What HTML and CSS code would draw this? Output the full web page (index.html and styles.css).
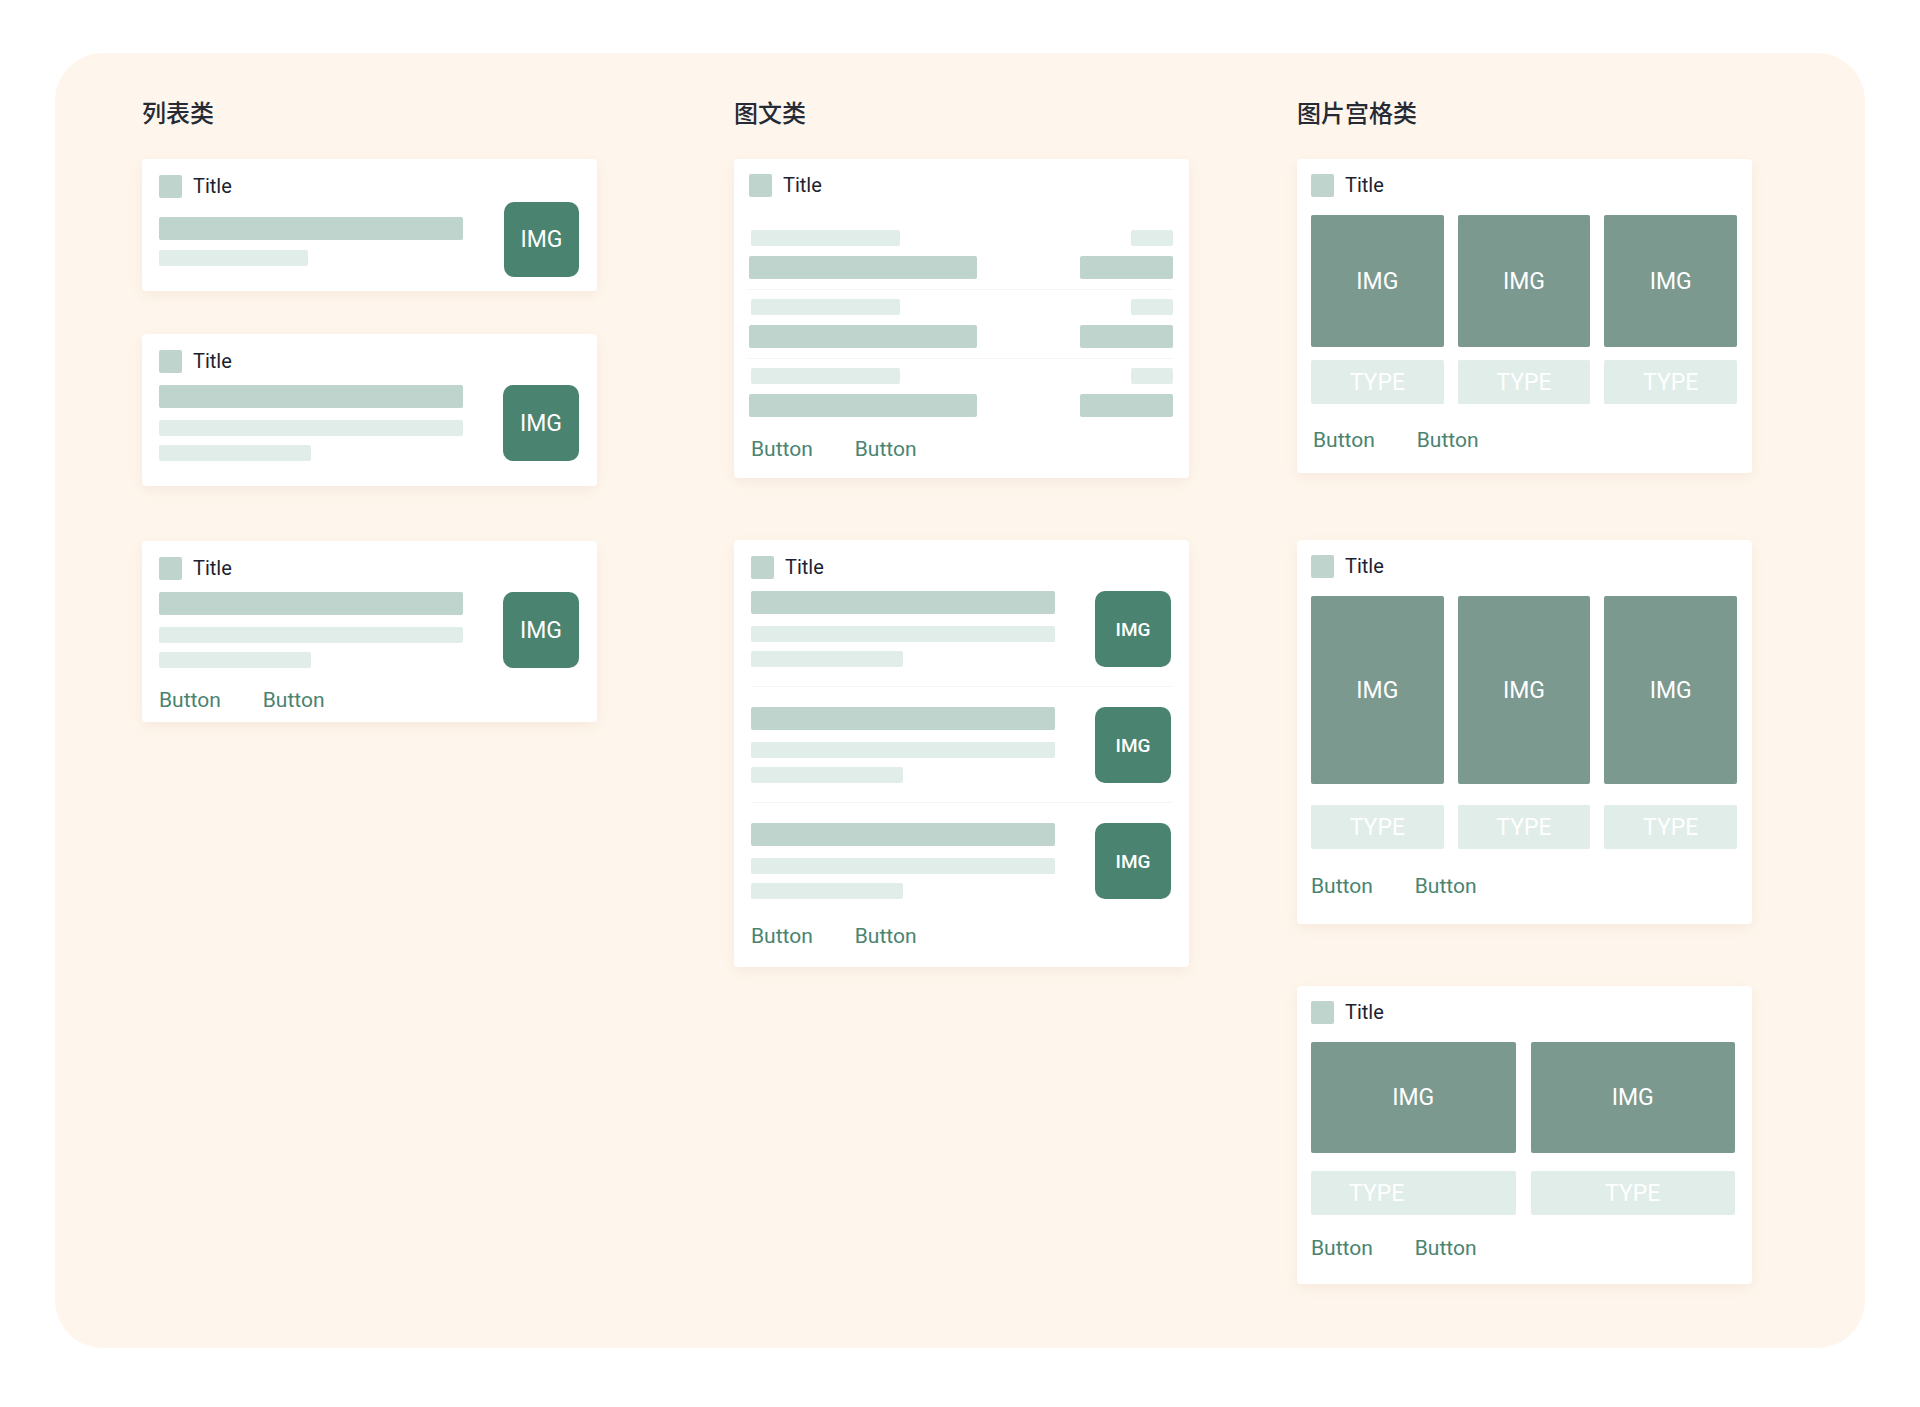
FILE: index.html
```html
<!DOCTYPE html>
<html lang="zh-CN">
<head>
  <meta charset="UTF-8">
  <title>卡片模板</title>
  <link rel="stylesheet" href="styles.css">
</head>
<body>
  <div class="board">

    <section class="col">
      <h2 class="col-title">列表类</h2>

      <div class="card card-list gap-43">
        <div class="card-head"><span class="head-mark"></span><span class="head-text">Title</span></div>
        <div class="list-body list-body-tight">
          <div class="bars bars-offset">
            <div class="bar bar-dark"></div>
            <div class="bar bar-light bar-short"></div>
          </div>
          <div class="thumb thumb-75">IMG</div>
        </div>
      </div>

      <div class="card card-list card-list-tall gap-55">
        <div class="card-head"><span class="head-mark"></span><span class="head-text">Title</span></div>
        <div class="list-body">
          <div class="bars">
            <div class="bar bar-dark"></div>
            <div class="bar bar-light"></div>
            <div class="bar bar-light bar-half"></div>
          </div>
          <div class="thumb">IMG</div>
        </div>
      </div>

      <div class="card card-list card-list-btn">
        <div class="card-head"><span class="head-mark"></span><span class="head-text">Title</span></div>
        <div class="list-body">
          <div class="bars">
            <div class="bar bar-dark"></div>
            <div class="bar bar-light"></div>
            <div class="bar bar-light bar-half"></div>
          </div>
          <div class="thumb">IMG</div>
        </div>
        <div class="actions actions-list">
          <span>Button</span>
          <span>Button</span>
        </div>
      </div>
    </section>

    <section class="col">
      <h2 class="col-title">图文类</h2>

      <div class="card card-kv gap-62">
        <div class="card-head"><span class="head-mark"></span><span class="head-text">Title</span></div>
        <div class="kv-list">
          <div class="kv-row">
            <div class="kv-line"><div class="bar bar-light kv-label"></div><div class="bar bar-light kv-label-r"></div></div>
            <div class="kv-line"><div class="bar bar-dark kv-value"></div><div class="bar bar-dark kv-value-r"></div></div>
          </div>
          <div class="kv-row">
            <div class="kv-line"><div class="bar bar-light kv-label"></div><div class="bar bar-light kv-label-r"></div></div>
            <div class="kv-line"><div class="bar bar-dark kv-value"></div><div class="bar bar-dark kv-value-r"></div></div>
          </div>
          <div class="kv-row">
            <div class="kv-line"><div class="bar bar-light kv-label"></div><div class="bar bar-light kv-label-r"></div></div>
            <div class="kv-line"><div class="bar bar-dark kv-value"></div><div class="bar bar-dark kv-value-r"></div></div>
          </div>
        </div>
        <div class="actions actions-kv actions-inset">
          <span>Button</span>
          <span>Button</span>
        </div>
      </div>

      <div class="card card-feed">
        <div class="card-head"><span class="head-mark"></span><span class="head-text">Title</span></div>
        <div class="feed">
          <div class="feed-row">
            <div class="bars">
              <div class="bar bar-dark"></div>
              <div class="bar bar-light"></div>
              <div class="bar bar-light bar-half"></div>
            </div>
            <div class="thumb thumb-small">IMG</div>
          </div>
          <div class="feed-row">
            <div class="bars">
              <div class="bar bar-dark"></div>
              <div class="bar bar-light"></div>
              <div class="bar bar-light bar-half"></div>
            </div>
            <div class="thumb thumb-small">IMG</div>
          </div>
          <div class="feed-row">
            <div class="bars">
              <div class="bar bar-dark"></div>
              <div class="bar bar-light"></div>
              <div class="bar bar-light bar-half"></div>
            </div>
            <div class="thumb thumb-small">IMG</div>
          </div>
        </div>
        <div class="actions actions-feed">
          <span>Button</span>
          <span>Button</span>
        </div>
      </div>
    </section>

    <section class="col">
      <h2 class="col-title">图片宫格类</h2>

      <div class="card card-grid gap-67">
        <div class="card-head"><span class="head-mark"></span><span class="head-text">Title</span></div>
        <div class="tiles tiles-3">
          <div class="tile tile-sq">IMG</div>
          <div class="tile tile-sq">IMG</div>
          <div class="tile tile-sq">IMG</div>
        </div>
        <div class="tiles tiles-3 types-13">
          <div class="type">TYPE</div>
          <div class="type">TYPE</div>
          <div class="type">TYPE</div>
        </div>
        <div class="actions actions-grid1 actions-inset">
          <span>Button</span>
          <span>Button</span>
        </div>
      </div>

      <div class="card card-grid gap-62">
        <div class="card-head"><span class="head-mark"></span><span class="head-text">Title</span></div>
        <div class="tiles tiles-3">
          <div class="tile tile-tall">IMG</div>
          <div class="tile tile-tall">IMG</div>
          <div class="tile tile-tall">IMG</div>
        </div>
        <div class="tiles tiles-3 types-21">
          <div class="type">TYPE</div>
          <div class="type">TYPE</div>
          <div class="type">TYPE</div>
        </div>
        <div class="actions actions-grid2">
          <span>Button</span>
          <span>Button</span>
        </div>
      </div>

      <div class="card card-grid card-grid-2">
        <div class="card-head"><span class="head-mark"></span><span class="head-text">Title</span></div>
        <div class="tiles tiles-2">
          <div class="tile tile-wide">IMG</div>
          <div class="tile tile-wide">IMG</div>
        </div>
        <div class="tiles tiles-2 types-18">
          <div class="type type-left">TYPE</div>
          <div class="type">TYPE</div>
        </div>
        <div class="actions actions-grid3">
          <span>Button</span>
          <span>Button</span>
        </div>
      </div>
    </section>

  </div>
</body>
</html>
```

FILE: styles.css
```css
body {
  margin: 0;
  background: #fff;
  font-family: Roboto, "Liberation Sans", sans-serif;
}
.board {
  margin: 53px 55px 0;
  height: 1295px;
  box-sizing: border-box;
  padding: 43px 0 0 87px;
  background: #fef6ec;
  border-radius: 48px;
  display: grid;
  grid-template-columns: 592px 563px 455px;
  align-items: start;
}
.col {
  width: 455px;
}
.col-title {
  margin: 0 0 31px;
  height: 32px;
  font-family: "Noto Sans CJK SC", sans-serif;
  font-size: 24px;
  line-height: 32px;
  font-weight: 500;
  color: #252a34;
}
.card {
  background: #fff;
  border-radius: 4px;
  box-shadow: 0 4px 14px rgba(214, 168, 148, 0.16);
}
.gap-43 { margin-bottom: 43px; }
.gap-55 { margin-bottom: 55px; }
.gap-62 { margin-bottom: 62px; }
.gap-67 { margin-bottom: 67px; }

.card-head {
  display: flex;
  align-items: center;
  gap: 11px;
  height: 23px;
}
.head-mark {
  width: 23px;
  height: 23px;
  border-radius: 2px;
  background: #bfd4cc;
}
.head-text {
  font-size: 20px;
  line-height: 23px;
  color: #1d2230;
}

.bar {
  height: 16px;
  border-radius: 2px;
  background: #e0ede8;
}
.bar-dark {
  height: 23px;
  background: #bfd4cc;
}
.bars {
  width: 304px;
  display: flex;
  flex-direction: column;
}
.bars .bar + .bar { margin-top: 9px; }
.bars .bar-dark + .bar { margin-top: 12px; }
.bars-offset { padding-top: 15px; }
.bars-offset .bar-dark + .bar { margin-top: 10px; }
.bar-short { width: 149px; }
.bar-half { width: 152px; }

.thumb {
  width: 76px;
  height: 76px;
  border-radius: 10px;
  background: #4a8370;
  color: #fff;
  font-size: 23px;
  display: flex;
  align-items: center;
  justify-content: center;
}
.thumb-75 {
  width: 75px;
  height: 75px;
}
.thumb-small {
  font-size: 19px;
  font-weight: 500;
}

/* 列表类 */
.card-list {
  padding: 16px 18px 14px 17px;
}
.card-list-tall { padding-bottom: 25px; }
.card-list-btn { padding-bottom: 10px; }
.list-body {
  margin-top: 12px;
  display: flex;
  justify-content: space-between;
  align-items: flex-start;
}
.list-body-tight { margin-top: 4px; }

.actions {
  display: flex;
  gap: 42px;
  font-size: 21px;
  line-height: 24px;
  color: #4a8370;
}
.actions-inset { padding-left: 2px; }
.actions-list { margin-top: 20px; }

/* 图文类 */
.card-kv {
  padding: 15px 16px 17px 15px;
}
.kv-list { margin-top: 24px; }
.kv-row {
  padding: 9px 0 10px;
}
.kv-row + .kv-row {
  border-top: 1px solid #f5f3f0;
}
.kv-line {
  display: flex;
  justify-content: space-between;
}
.kv-line + .kv-line { margin-top: 10px; }
.kv-label {
  width: 149px;
  margin-left: 2px;
}
.kv-label-r { width: 42px; }
.kv-value { width: 228px; }
.kv-value-r { width: 93px; }
.actions-kv { margin-top: 10px; }

.card-feed {
  padding: 16px 18px 19px 17px;
}
.feed { margin-top: 12px; }
.feed-row {
  display: flex;
  justify-content: space-between;
  padding-bottom: 19px;
}
.feed-row + .feed-row {
  border-top: 1px solid #f5f3f0;
  padding-top: 20px;
}
.feed-row:last-child { padding-bottom: 0; }
.actions-feed { margin-top: 25px; }

/* 图片宫格类 */
.card-grid {
  padding: 15px 15px 21px 14px;
}
.card-grid-2 { padding-right: 17px; }
.tiles {
  display: grid;
  gap: 14px;
  margin-top: 18px;
}
.tiles-3 { grid-template-columns: 1fr 1fr 1fr; }
.tiles-2 {
  grid-template-columns: 1fr 1fr;
  gap: 15px;
}
.tile {
  border-radius: 2px;
  background: #7b998f;
  color: #fff;
  font-size: 23px;
  display: flex;
  align-items: center;
  justify-content: center;
}
.tile-sq { height: 132px; }
.tile-tall { height: 188px; }
.tile-wide { height: 111px; }
.types-13 { margin-top: 13px; }
.types-21 { margin-top: 21px; }
.types-18 { margin-top: 18px; }
.type {
  height: 44px;
  border-radius: 2px;
  background: #e0ede8;
  color: #fff;
  font-size: 23px;
  display: flex;
  align-items: center;
  justify-content: center;
}
.type-left {
  justify-content: flex-start;
  padding-left: 38px;
}
.actions-grid1 { margin-top: 24px; }
.actions-grid2 { margin-top: 25px; margin-bottom: 5px; }
.actions-grid3 { margin-top: 21px; margin-bottom: 3px; }
```
